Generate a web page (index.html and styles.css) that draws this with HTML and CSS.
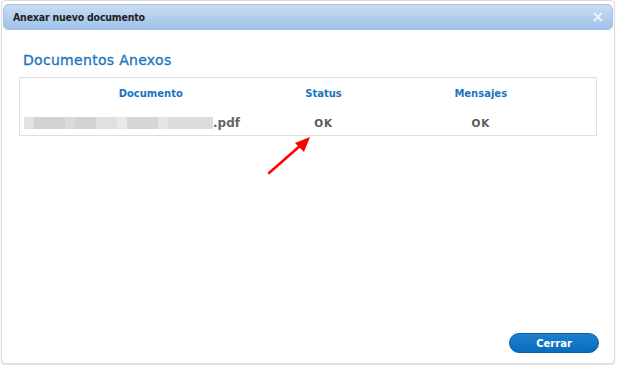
FILE: index.html
```html
<!DOCTYPE html>
<html>
<head>
<meta charset="utf-8">
<link rel="stylesheet" href="styles.css">
</head>
<body>
<div class="dialog">
  <div class="titlebar">
    <span class="title">Anexar nuevo documento</span>
    <span class="close">×</span>
  </div>
  <div class="content">
    <h2 class="heading">Documentos Anexos</h2>
    <table class="docs">
      <colgroup><col class="c1"><col class="c2"><col class="c3"></colgroup>
      <thead>
        <tr><th>Documento</th><th>Status</th><th>Mensajes</th></tr>
      </thead>
      <tbody>
        <tr>
          <td class="file"><span class="blur"><span class="b b1"></span><span class="b b2"></span><span class="b b3"></span><span class="b b4"></span><span class="b b5"></span><span class="b b6"></span><span class="b b7"></span><span class="b b8"></span><span class="b b9"></span></span>.pdf</td>
          <td class="ok">OK</td>
          <td class="ok">OK</td>
        </tr>
      </tbody>
    </table>
  </div>
  <div class="buttons"><button class="btn">Cerrar</button></div>
  <svg class="arrow" width="50" height="44" viewBox="0 0 50 44">
    <line x1="4" y1="40" x2="36" y2="12" stroke="#f00" stroke-width="2.5" stroke-linecap="round"/>
    <polygon points="45,4 30,10 39,19" fill="#f00"/>
  </svg>
</div>
</body>
</html>
```

FILE: styles.css
```css
html, body {
  margin: 0;
  padding: 0;
  background: #ffffff;
}
body {
  width: 617px;
  height: 369px;
  overflow: hidden;
  font-family: "DejaVu Sans", Verdana, sans-serif;
}
.dialog {
  position: relative;
  box-sizing: border-box;
  margin: 0 2px 0 1px;
  height: 364px;
  border: 1px solid #dcdcdc;
  border-radius: 4px;
  padding: 3px 1px 0;
  background: #fff;
  display: flex;
  flex-direction: column;
  box-shadow: 0 1px 1px #e2e2e2;
}
.titlebar {
  box-sizing: border-box;
  height: 26px;
  border: 1px solid #a6c3e6;
  border-radius: 5px;
  background: linear-gradient(#c9dcf2, #9fc2e9);
  display: flex;
  align-items: center;
  justify-content: space-between;
  padding: 0 8px 0 9px;
}
.title {
  font-family: "DejaVu Sans Condensed", "DejaVu Sans", sans-serif;
  font-weight: bold;
  font-size: 10.5px;
  letter-spacing: -0.2px;
  color: #1e1e1e;
}
.close {
  font-weight: bold;
  font-size: 15px;
  color: #eef4fb;
  line-height: 1;
}
.content {
  flex: 1;
  padding: 0 16px;
}
.heading {
  margin: 22px 0 8px 4px;
  font-size: 14px;
  line-height: 17px;
  font-weight: normal;
  color: #1a74bd;
  letter-spacing: 0.3px;
  -webkit-text-stroke: 0.3px #1a74bd;
}
.docs {
  width: 100%;
  border-collapse: collapse;
  table-layout: fixed;
  border: 1px solid #dedede;
}
.c1 { width: 262px; }
.c2 { width: 84px; }
.c3 { width: 231px; }
.docs th {
  font-size: 10px;
  line-height: 12px;
  font-weight: bold;
  color: #1a74bd;
  text-align: center;
  padding: 10px 0 7px;
}
.docs td {
  font-size: 10.5px;
  line-height: 12px;
  padding: 10px 0 6px;
  color: #5a5a5a;
  font-weight: bold;
}
.docs td.file {
  padding-left: 4px;
  font-size: 12px;
  color: #666;
  display: flex;
  align-items: center;
}
.ok {
  text-align: center;
  letter-spacing: 0.6px;
}
.blur {
  display: flex;
  height: 12px;
}
.b { display: block; height: 12px; }
.b1 { width: 10px; background: #e2e2e2; }
.b2 { width: 31px; background: #d2d2d2; }
.b3 { width: 10px; background: #dadada; }
.b4 { width: 21px; background: #d2d2d2; }
.b5 { width: 21px; background: #e0e0e0; }
.b6 { width: 10px; background: #e9e9e9; }
.b7 { width: 31px; background: #d5d5d5; }
.b8 { width: 10px; background: #e5e5e5; }
.b9 { width: 45px; background: #dcdcdc; }
.buttons {
  display: flex;
  justify-content: flex-end;
  padding: 0 14px 10px;
}
.btn {
  box-sizing: border-box;
  width: 90px;
  height: 20px;
  border: 1px solid #0b5fa3;
  border-radius: 10px;
  background: linear-gradient(#1b80cf, #0a6cbc);
  color: #fff;
  font-family: "DejaVu Sans", sans-serif;
  font-weight: bold;
  font-size: 10px;
  padding: 0;
}
.arrow {
  position: absolute;
  left: 263px;
  top: 132px;
}
```
